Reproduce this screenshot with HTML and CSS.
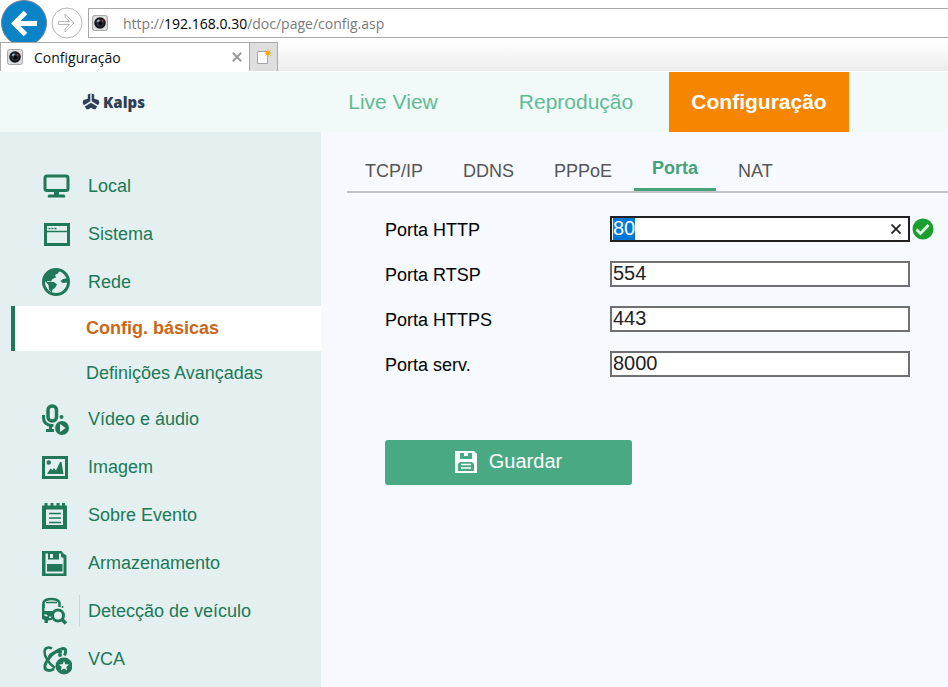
FILE: index.html
```html
<!DOCTYPE html>
<html lang="pt">
    <head>
        <meta charset="UTF-8">
        <title>Configuração</title>
        <link rel="stylesheet" href="styles.css">
    </head>
    <body>
        <svg class="defs" width="0" height="0" aria-hidden="true">
            <symbol id="camera" viewBox="0 0 16 16">
                <rect x=".5" y=".5" width="15" height="15" rx="2" fill="#dcdcdc" stroke="#a8a8a8"/>
                <circle cx="8" cy="8" r="5.800" fill="#16181c"/>
                <circle cx="8" cy="8" r="3.600" fill="#30343a"/>
                <circle cx="8.500" cy="8.500" r="2" fill="#05070a"/>
                <path d="M4.500 6.500a4 4 0 0 1 2.600-2.200l.8 1.500a2.500 2.500 0 0 0-1.700 1.400z" fill="#9db4c8"/>
                <path d="M9.500 4.500l2.200 1-.8 1.700z" fill="#c5483c"/>
            </symbol>
        </svg>

        <div class="toolbar">
            <button class="back" type="button" aria-label="Voltar">
                <svg width="46" height="46" viewBox="0 0 46 46">
                    <circle cx="23" cy="23" r="22.5" fill="#0a84c6" stroke="#6f7f8a"/>
                    <path d="M36 23.500H14M24.500 12.500l-11 11 11 11" fill="none" stroke="#fff" stroke-width="5"/>
                </svg>
            </button>
            <button class="forward" type="button" aria-label="Avançar">
                <svg width="32" height="32" viewBox="0 0 32 32">
                    <circle cx="16" cy="16" r="15" fill="#fff" stroke="#b4b4b4"/>
                    <path d="M7.500 14.500h11l-4.500-4.500v-3l9 9-9 9v-3l4.500-4.500h-11z" fill="none" stroke="#b8b8b8"/>
                </svg>
            </button>
            <div class="address">
                <svg width="16" height="16"><use href="#camera"/></svg>
                <span class="url">http://<b>192.168.0.30</b>/doc/page/config.asp</span>
            </div>
        </div>

        <div class="tabstrip">
            <div class="browser-tab">
                <svg width="16" height="16"><use href="#camera"/></svg>
                <span class="browser-tab-title">Configuração</span>
                <button class="tab-close" type="button" aria-label="Fechar">
                    <svg width="10" height="10" viewBox="0 0 10 10"><path d="M.8.8l8.400 8.400M9.200.8L.8 9.200" stroke="#9b9b9b" stroke-width="2"/></svg>
                </button>
            </div>
            <button class="new-tab" type="button" aria-label="Novo separador">
                <svg width="16" height="16" viewBox="0 0 16 16">
                    <path d="M1.500 2.500h10v12h-10z" fill="#fdfdfd" stroke="#a5a5a5"/>
                    <circle cx="12" cy="4" r="2.200" fill="#f7c04a"/>
                    <path d="M12 .5v7M8.500 4h7M9.500 1.500l5 5M14.500 1.500l-5 5" stroke="#f0a81c"/>
                </svg>
            </button>
        </div>

        <header>
            <div class="logo">
                <svg width="18" height="18" viewBox="0 0 18 18">
                    <path d="M5.800 1.500L8.300.6v7.600L2 12.200.6 10l.8-3 4.400-1.300zM12.200 1.500L9.700.6v7.600l6.300 4 1.400-2.200-.8-3-4.400-1.300z" fill="#2f3f55"/>
                    <path d="M9 9.800l6.300 3.800-1.800 2.600h-2L9 14.800l-2.500 1.400h-2l-1.800-2.600z" fill="#2f3f55"/>
                </svg>
                <span>Kalps</span>
            </div>
            <nav>
                <a href="#">Live View</a>
                <a href="#">Reprodução</a>
                <a href="#" class="current">Configuração</a>
            </nav>
        </header>

        <div class="content">
            <aside>
                <ul class="menu">
                    <li><a href="#">
                        <svg width="32" height="32" viewBox="0 0 32 32">
                            <rect x="5" y="6" width="23" height="14.500" rx="2" fill="none" stroke="currentColor" stroke-width="3"/>
                            <path d="M14 21h5v3.500h4.500a2 2 0 0 1 1.500 3H8a2 2 0 0 1 1.500-3H14z" fill="currentColor"/>
                        </svg>Local</a></li>
                    <li><a href="#">
                        <svg width="32" height="32" viewBox="0 0 32 32">
                            <path d="M5.500 6.500h23v20h-23z" fill="none" stroke="currentColor" stroke-width="3"/>
                            <path d="M6 13.500h22" stroke="currentColor" stroke-width="1.500"/>
                            <path d="M8.500 10.500h8" stroke="currentColor" stroke-width="1.500" stroke-dasharray="2 1"/>
                        </svg>Sistema</a></li>
                    <li><a href="#">
                        <svg width="32" height="32" viewBox="0 0 32 32">
                            <circle cx="16" cy="16" r="12.500" fill="none" stroke="currentColor" stroke-width="3"/>
                            <path d="M4 14l2-7 6-4 7.500 1-1.500 3.500-3 1.500 1 2.500-3.500 1.500-1.500 2.500-3.500-.5-.500 1h7l3 2.500-2 3.500-2.500 1.500-.500 3-3-3-.5-4.500zM28.500 12l-5.500 1-2.500 2 2 2 6-.5z" fill="currentColor"/>
                        </svg>Rede</a>
                        <ul class="submenu">
                            <li><a href="#" class="current">Config. básicas</a></li>
                            <li><a href="#">Definições Avançadas</a></li>
                        </ul>
                    </li>
                    <li><a href="#">
                        <svg width="32" height="32" viewBox="0 0 32 32">
                            <rect x="8" y="3" width="8.500" height="15" rx="4" fill="none" stroke="currentColor" stroke-width="3.500"/>
                            <path d="M3.500 12v3c0 4.500 3.500 7.500 8 7.500h2M10.500 22v5M6 27.500h8" fill="none" stroke="currentColor" stroke-width="3"/>
                            <circle cx="21.500" cy="14" r="2" fill="currentColor"/>
                            <circle cx="22" cy="25" r="7" fill="currentColor"/>
                            <path d="M20 21l5.500 4-5.500 4z" fill="#e4f0ef"/>
                        </svg>Vídeo e áudio</a></li>
                    <li><a href="#">
                        <svg width="32" height="32" viewBox="0 0 32 32">
                            <path d="M3.500 6.500h23v20h-23z" fill="none" stroke="currentColor" stroke-width="3"/>
                            <circle cx="8.800" cy="11.500" r="2.200" fill="currentColor"/>
                            <path d="M7 23l3.500-5.500 2 1.500 1.500-2 2 2.500L20 11h1.500L23.500 23z" fill="currentColor"/>
                        </svg>Imagem</a></li>
                    <li><a href="#">
                        <svg width="32" height="32" viewBox="0 0 32 32">
                            <path d="M4 8.500h21V28H4z" fill="none" stroke="currentColor" stroke-width="4"/>
                            <path d="M6 4v4M12 4v4M18 4v4M23.500 4v4" stroke="currentColor" stroke-width="3"/>
                            <path d="M9 14.500h12M9 19h12M9 23.500h12" stroke="currentColor" stroke-width="1.500"/>
                        </svg>Sobre Evento</a></li>
                    <li><a href="#">
                        <svg width="32" height="32" viewBox="0 0 32 32">
                            <path d="M2 4h19.500l2 2.500 3 2V29H2z" fill="currentColor"/>
                            <path d="M5.500 6.500H8v6h11v-6h2V10l2.500 1v15.500h-18z" fill="#e4f0ef"/>
                            <path d="M10 7h3v4h-3z" fill="#e4f0ef"/>
                            <path d="M7 17h15.500v7.500H7z" fill="currentColor"/>
                        </svg>Armazenamento</a></li>
                    <li><a href="#" class="split">
                        <svg width="32" height="32" viewBox="0 0 32 32">
                            <path d="M3.500 13V7.500C4.500 4.500 8 4 11.500 4s6.500.5 8 3.500V12" fill="none" stroke="currentColor" stroke-width="2.500"/>
                            <path d="M6 7.500h11" stroke="currentColor" stroke-width="1.500"/>
                            <path d="M2 9h2.500v7H13l-1.500 3.500L12 25l-4 .5V28H4.500v-3L2 24z" fill="currentColor"/>
                            <path d="M4.500 19l3 1v1.500l-3-.5zM9 21.500h2v1.500H9z" fill="#e4f0ef"/>
                            <circle cx="18" cy="20.500" r="5.500" fill="#e4f0ef" stroke="currentColor" stroke-width="3"/>
                            <path d="M21.500 24l4.500 4.500" stroke="currentColor" stroke-width="3.500"/>
                            <circle cx="22.500" cy="12" r="1" fill="currentColor"/>
                        </svg>Detecção de veículo</a></li>
                    <li><a href="#">
                        <svg width="32" height="32" viewBox="0 0 32 32">
                            <path d="M14 26c-4 2-8 2-9-1s1-6 4-10S18 6 23 5.500c3 0 3.500 2.500 1.500 7" fill="none" stroke="currentColor" stroke-width="3"/>
                            <path d="M12 5.500C8 3.500 4.500 5 4.500 9S8 20 15 25M9 14c1-3 6-6 13-5" fill="none" stroke="currentColor" stroke-width="2.500"/>
                            <circle cx="20" cy="12" r="2" fill="currentColor"/>
                            <circle cx="24" cy="23" r="8.500" fill="currentColor"/>
                            <path d="M24 18l1.400 3.200 3.600.4-2.700 2.300.8 3.600-3.100-1.900-3.100 1.900.8-3.600-2.700-2.300 3.600-.4z" fill="#e4f0ef"/>
                        </svg>VCA</a></li>
                </ul>
            </aside>

            <main>
                <div class="tabs">
                    <a href="#">TCP/IP</a>
                    <a href="#">DDNS</a>
                    <a href="#">PPPoE</a>
                    <a href="#" class="current">Porta</a>
                    <a href="#">NAT</a>
                </div>
                <form>
                    <div class="row">
                        <label for="http">Porta HTTP</label>
                        <div class="field">
                            <input type="text" id="http" value="80">
                            <button class="clear" type="button" aria-label="Limpar">
                                <svg width="10" height="10" viewBox="0 0 10 10"><path d="M.5.5l9 9M9.500.5l-9 9" stroke="#222" stroke-width="1.800"/></svg>
                            </button>
                        </div>
                        <svg class="valid" width="22" height="22" viewBox="0 0 22 22">
                            <circle cx="11" cy="11" r="10.500" fill="#1a9e2e"/>
                            <path d="M4.500 11.500l4 4 8-8.500" fill="none" stroke="#e6f6e8" stroke-width="2.800"/>
                        </svg>
                    </div>
                    <div class="row">
                        <label for="rtsp">Porta RTSP</label>
                        <div class="field"><input type="text" id="rtsp" value="554"></div>
                    </div>
                    <div class="row">
                        <label for="https">Porta HTTPS</label>
                        <div class="field"><input type="text" id="https" value="443"></div>
                    </div>
                    <div class="row">
                        <label for="server">Porta serv.</label>
                        <div class="field"><input type="text" id="server" value="8000"></div>
                    </div>
                    <button class="save" type="button">
                        <svg width="22" height="22" viewBox="0 0 22 22">
                            <path d="M0 0h19l3 3v19H0z" fill="#fff"/>
                            <path d="M5 2h4v3h4V2h4v6H5zM5 11h12l2 2v7H3v-7z" fill="#49a982"/>
                            <path d="M6 13.500h10M6 17h10" stroke="#fff" stroke-width="1.500"/>
                        </svg>
                        Guardar
                    </button>
                </form>
            </main>
        </div>

        <script>
            const httpPort = document.getElementById('http');
            httpPort.focus();
            httpPort.select();
        </script>
    </body>
</html>
```
FILE: styles.css
```css
* {
    box-sizing: border-box;
}
body {
    margin: 0;
    min-height: 100vh;
    display: flex;
    flex-direction: column;
    font-family: "Liberation Sans", Arial, sans-serif;
    font-size: 18px;
    background: #f6f9fe;
}
a {
    text-decoration: none;
    color: inherit;
}
button {
    border: none;
    padding: 0;
    background: none;
    font: inherit;
}
svg {
    display: block;
    flex: none;
}
ul {
    list-style: none;
    margin: 0;
    padding: 0;
}
.defs {
    position: absolute;
}

/* browser */
.toolbar {
    display: flex;
    align-items: center;
    height: 42px;
    padding-top: 4px;
    padding-left: 1px;
    overflow: hidden;
    background: #fff;
    font-family: "Open Sans", "Noto Sans", sans-serif;
}
.forward {
    margin: 0 5px 0 4px;
}
.address {
    flex: 1;
    display: flex;
    align-items: center;
    gap: 15px;
    height: 30px;
    padding-left: 3px;
    border: 1px solid #a9a9a9;
    border-right: none;
}
.url {
    font-size: 14px;
    color: #7a7a7a;
}
.url b {
    font-weight: normal;
    color: #000;
}
.tabstrip {
    display: flex;
    height: 30px;
    border-bottom: 1px solid #fff;
    background: linear-gradient(#fff, #ebebeb);
    font-family: "Open Sans", "Noto Sans", sans-serif;
}
.browser-tab {
    display: flex;
    align-items: center;
    width: 249px;
    padding: 0 7px 0 6px;
    border-top: 1px solid #a9a9a9;
    border-left: 1px solid #a9a9a9;
    background: #fff;
}
.browser-tab-title {
    flex: 1;
    margin-left: 11px;
    font-size: 14px;
    color: #111;
}
.new-tab {
    display: flex;
    align-items: center;
    justify-content: center;
    width: 29px;
    border: 1px solid #a9a9a9;
    border-bottom: none;
    background: #dedede;
}

/* header */
header {
    display: flex;
    height: 60px;
    background: #f1faf9;
}
.logo {
    display: flex;
    align-items: center;
    gap: 3px;
    width: 303px;
    padding-left: 82px;
    color: #2f3f55;
    font-family: "Open Sans", sans-serif;
    font-size: 15px;
    font-weight: 800;
}
nav {
    display: flex;
    gap: 3px;
}
nav a {
    width: 180px;
    line-height: 60px;
    text-align: center;
    font-size: 21px;
    color: #60ba93;
}
nav .current {
    background: #f68500;
    color: #fff;
    font-weight: bold;
}

/* side menu */
.content {
    flex: 1;
    display: flex;
}
aside {
    flex: none;
    width: 321px;
    padding-top: 30px;
    background: #e4f0ef;
    color: #207858;
}
.menu > li > a {
    display: flex;
    align-items: center;
    gap: 16px;
    height: 48px;
    padding-left: 40px;
}
.menu .split {
    gap: 8px;
}
.split svg {
    box-sizing: content-box;
    padding-right: 7px;
    border-right: 1px solid #c0dcd4;
}
.submenu {
    margin-bottom: -1px;
}
.submenu a {
    display: block;
    margin-left: 11px;
    padding-left: 71px;
    border-left: 4px solid transparent;
    line-height: 45px;
}
.submenu .current {
    border-left-color: #207858;
    background: #fff;
    color: #cb6716;
    font-weight: bold;
}

/* settings */
main {
    flex: 1;
    padding: 16px 0 0 26px;
}
.tabs {
    display: flex;
    align-items: flex-end;
    gap: 4px;
    border-bottom: 2px solid #c4c4c6;
    line-height: 40px;
    color: #555;
}
.tabs a {
    padding: 0 18px;
}
.tabs .current {
    border-bottom: 3px solid #45a27a;
    color: #45a27a;
    font-weight: bold;
}
form {
    padding: 13px 0 0 38px;
}
.row {
    display: flex;
    align-items: center;
    height: 45px;
}
.row label {
    width: 225px;
    padding-top: 4px;
    color: #000;
}
.field {
    position: relative;
    width: 300px;
}
.field input {
    display: block;
    width: 100%;
    height: 26px;
    padding: 0 1px;
    border: 2px solid #707070;
    border-radius: 0;
    outline: none;
    background: #fff;
    color: #222;
    font-family: inherit;
    font-size: 20px;
}
.field input:focus {
    border-color: #202020;
}
.field input::selection {
    background: #0078d7;
    color: #fff;
}
.clear {
    position: absolute;
    top: 8px;
    right: 9px;
}
.valid {
    margin-left: 2px;
}
.save {
    display: flex;
    align-items: center;
    justify-content: center;
    gap: 12px;
    width: 247px;
    height: 45px;
    margin-top: 54px;
    padding-bottom: 2px;
    border-radius: 3px;
    background: #49a982;
    color: #fff;
    font-size: 20px;
}
```
